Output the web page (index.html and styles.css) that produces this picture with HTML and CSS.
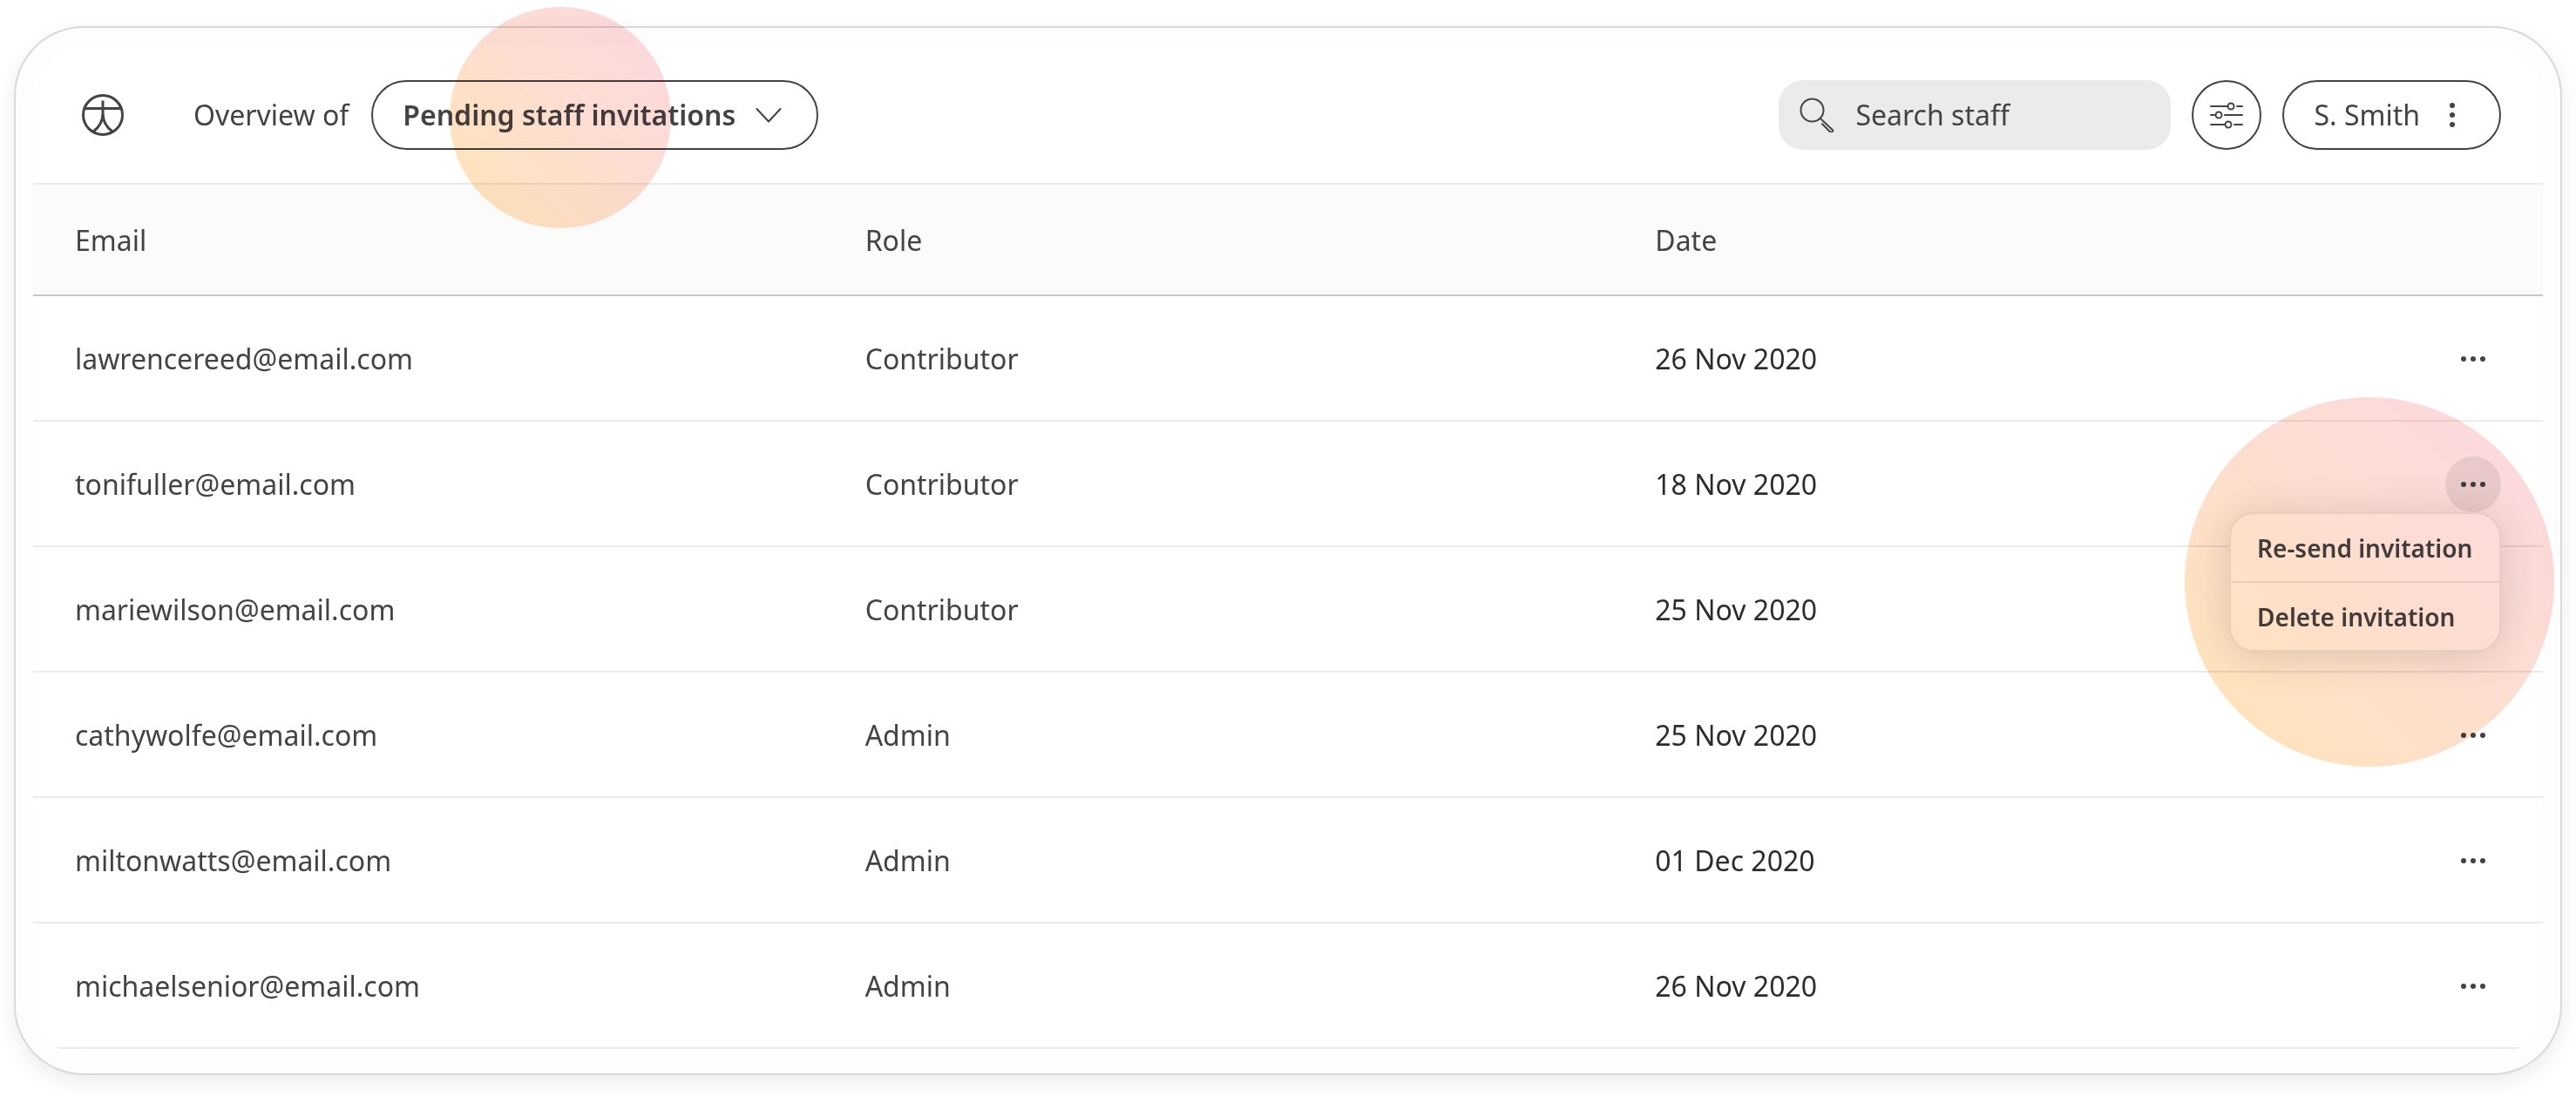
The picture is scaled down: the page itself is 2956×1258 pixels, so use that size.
FILE: index.html
```html
<!DOCTYPE html>
<html lang="en">
<head>
<meta charset="utf-8">
<title>Pending staff invitations</title>
<link rel="stylesheet" href="styles.css">
</head>
<body>
<main class="card">
  <div class="panel">
    <header class="toolbar">
      <a class="logo" href="#" aria-label="Home">
        <svg width="48" height="48" viewBox="0 0 48 48" fill="none" stroke="currentColor" stroke-width="3">
          <circle cx="24" cy="24" r="22.5"/>
          <path d="M3 16.500H45M24 7.500V22C24 30 20.500 37.500 13 43M24 22C24 30 27.500 37.500 35 43"/>
        </svg>
      </a>
      <span class="overview">Overview of</span>
      <button class="pill view-picker" type="button" aria-haspopup="listbox">
        Pending staff invitations
        <svg width="30" height="20" viewBox="0 0 30 20" fill="none" stroke="currentColor" stroke-width="2" stroke-linecap="round" stroke-linejoin="round"><path d="M1.500 3L15 17.500 28.500 3"/></svg>
      </button>
      <div class="tools">
        <label class="search">
          <svg width="40" height="40" viewBox="0 0 40 40" fill="none" stroke="currentColor" stroke-width="2" stroke-linecap="round" stroke-linejoin="round">
            <circle cx="14.500" cy="14.500" r="13"/>
            <path d="M23.700 23.700L38 37.200Q38.700 38.200 37.800 39L37 39.600Q35.800 40 35 39.200L26 30.300"/>
          </svg>
          <input class="search-input" type="search" placeholder="Search staff" aria-label="Search staff">
        </label>
        <button class="pill filter" type="button" aria-label="Filter">
          <svg width="40" height="32" viewBox="0 0 40 32" fill="none" stroke="currentColor" stroke-width="2" stroke-linecap="round">
            <path d="M2 6H21M32 6H38M2 16H6M18 16H38M2 27H18M29 27H38"/>
            <circle cx="25" cy="6" r="3.500"/><circle cx="11" cy="16" r="3.500"/><circle cx="22" cy="27" r="3.500"/>
          </svg>
        </button>
        <button class="pill account" type="button" aria-haspopup="menu">
          S. Smith
          <svg width="8" height="30" viewBox="0 0 8 30" fill="currentColor"><circle cx="4" cy="4" r="3"/><circle cx="4" cy="15" r="3"/><circle cx="4" cy="26" r="3"/></svg>
        </button>
      </div>
    </header>
    <table class="invites">
      <colgroup><col><col><col><col class="col-actions"></colgroup>
      <thead>
        <tr><th scope="col">Email</th><th scope="col">Role</th><th scope="col">Date</th><td></td></tr>
      </thead>
      <tbody>
        <tr><td>lawrencereed@email.com</td><td>Contributor</td><td class="date">26 Nov 2020</td><td><button class="more" type="button" aria-label="Actions"><svg width="30" height="8" viewBox="0 0 30 8" fill="currentColor"><circle cx="4" cy="4" r="3"/><circle cx="15" cy="4" r="3"/><circle cx="26" cy="4" r="3"/></svg></button></td></tr>
        <tr><td>tonifuller@email.com</td><td>Contributor</td><td class="date">18 Nov 2020</td><td>
          <div class="more-wrap">
            <button class="more more-open" type="button" aria-label="Actions" aria-expanded="true"><svg width="30" height="8" viewBox="0 0 30 8" fill="currentColor"><circle cx="4" cy="4" r="3"/><circle cx="15" cy="4" r="3"/><circle cx="26" cy="4" r="3"/></svg></button>
            <div class="menu" role="menu">
              <button class="menu-item" type="button" role="menuitem">Re-send invitation</button>
              <button class="menu-item" type="button" role="menuitem">Delete invitation</button>
            </div>
          </div>
        </td></tr>
        <tr><td>mariewilson@email.com</td><td>Contributor</td><td class="date">25 Nov 2020</td><td></td></tr>
        <tr><td>cathywolfe@email.com</td><td>Admin</td><td class="date">25 Nov 2020</td><td><button class="more" type="button" aria-label="Actions"><svg width="30" height="8" viewBox="0 0 30 8" fill="currentColor"><circle cx="4" cy="4" r="3"/><circle cx="15" cy="4" r="3"/><circle cx="26" cy="4" r="3"/></svg></button></td></tr>
        <tr><td>miltonwatts@email.com</td><td>Admin</td><td class="date">01 Dec 2020</td><td><button class="more" type="button" aria-label="Actions"><svg width="30" height="8" viewBox="0 0 30 8" fill="currentColor"><circle cx="4" cy="4" r="3"/><circle cx="15" cy="4" r="3"/><circle cx="26" cy="4" r="3"/></svg></button></td></tr>
        <tr><td>michaelsenior@email.com</td><td>Admin</td><td class="date">26 Nov 2020</td><td><button class="more" type="button" aria-label="Actions"><svg width="30" height="8" viewBox="0 0 30 8" fill="currentColor"><circle cx="4" cy="4" r="3"/><circle cx="15" cy="4" r="3"/><circle cx="26" cy="4" r="3"/></svg></button></td></tr>
      </tbody>
    </table>
  </div>
  <div class="spot spot-view"></div>
  <div class="spot spot-menu"></div>
</main>
</body>
</html>
```
FILE: styles.css
```css
* { box-sizing: border-box; }

body {
  margin: 0;
  padding: 30px 16px 24px;
  background: #fff;
  color: #434347;
  font: 32px/44px "Noto Sans", sans-serif;
}

button, input { font: inherit; color: inherit; margin: 0; }
button { padding: 0; border: 0; background: none; cursor: pointer; }
svg { display: block; flex: none; }

.card {
  position: relative;
  padding: 20px;
  border: 2px solid #d9d9d9;
  border-radius: 80px;
  background: #fdfdfd;
  box-shadow: 0 8px 24px rgba(0, 0, 0, 0.08);
}

.panel {
  padding-bottom: 8px;
  border-radius: 60px;
  background: #fff;
  overflow: hidden;
}

.toolbar {
  display: flex;
  align-items: center;
  padding: 40px 48px 38px 56px;
  border-bottom: 2px solid #ebebeb;
}

.logo { color: inherit; margin-right: 80px; }
.overview { margin-right: 26px; }

.pill {
  display: flex;
  align-items: center;
  height: 80px;
  border: 2px solid #434347;
  border-radius: 40px;
  white-space: nowrap;
}

.view-picker {
  gap: 23px;
  padding: 0 40px 0 34px;
  font-weight: 600;
}

.tools {
  display: flex;
  gap: 24px;
  margin-left: auto;
}

.search {
  display: flex;
  align-items: center;
  gap: 24px;
  width: 450px;
  height: 80px;
  padding: 0 24px;
  border-radius: 28px;
  background: #ebebeb;
}

.search-input {
  flex: 1;
  min-width: 0;
  padding: 0;
  border: 0;
  outline: 0;
  background: none;
}

.search-input::placeholder { color: inherit; opacity: 1; }

.filter { width: 80px; justify-content: center; }

.account {
  gap: 33px;
  padding: 0 50px 0 34px;
}

.invites {
  width: 100%;
  table-layout: fixed;
  border-collapse: separate;
  border-spacing: 0;
}

.col-actions { width: 160px; }

.invites th, .invites td {
  padding: 2px 0 0 48px;
  text-align: left;
  font-weight: 400;
}

.invites thead th, .invites thead td {
  height: 128px;
  border-bottom: 2px solid #c7c7cd;
  background: #fbfbfb;
}

.invites tbody td {
  height: 144px;
  border-bottom: 2px solid #ebebeb;
}

.invites .date { color: #2c2c30; }

.more-wrap { position: relative; width: 64px; }

.more {
  display: flex;
  align-items: center;
  justify-content: center;
  width: 64px;
  height: 64px;
  border-radius: 50%;
}

.more-open { background: #ebebeb; }

.menu {
  position: absolute;
  top: 100%;
  right: 0;
  z-index: 1;
  width: 312px;
  border: 2px solid #ebebeb;
  border-radius: 28px;
  background: #fff;
  box-shadow: 0 4px 48px rgba(0, 0, 0, 0.14);
}

.menu-item {
  display: block;
  width: 100%;
  height: 77px;
  padding-left: 30px;
  font-size: 28px;
  font-weight: 600;
  text-align: left;
}

.menu-item + .menu-item { height: 79px; border-top: 2px solid #ebebeb; }

/* Tinted highlights that call out parts of the screen */
.spot {
  position: absolute;
  z-index: 2;
  border-radius: 50%;
  background: linear-gradient(225deg, #fcd9dc 14%, #fdddd3 42%, #ffe3bd 86%);
  mix-blend-mode: multiply;
  pointer-events: none;
}

.spot-view { left: 498px; top: -24px; width: 254px; height: 254px; }
.spot-menu { right: 7px; top: 424px; width: 424px; height: 424px; }
```
